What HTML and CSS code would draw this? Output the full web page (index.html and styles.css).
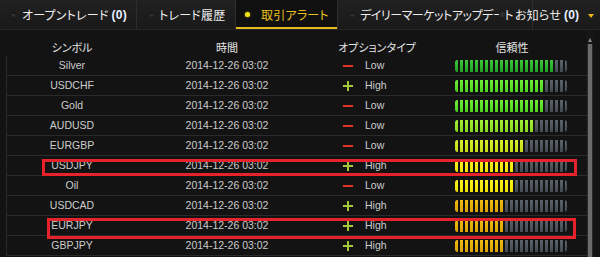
FILE: index.html
```html
<!DOCTYPE html>
<html lang="ja">
<head>
<meta charset="utf-8">
<title>取引アラート</title>
<link rel="stylesheet" href="styles.css">
</head>
<body>
<div class="app">
  <nav class="tabs">
    <div class="tab t1"><span class="dot"></span>オープントレード <b>(0)</b></div>
    <div class="tab t2"><span class="dot"></span>トレード履歴</div>
    <div class="tab t3 active"><span class="dot"></span>取引アラート</div>
    <div class="tab t4"><span class="dot"></span><span class="label">デイリーマーケットアップデート</span></div>
    <div class="tab t5"><span class="dot"></span>お知らせ <b>(0)</b></div>
    <span class="more"></span>
  </nav>
  <div class="main">
    <div class="table">
      <div class="thead">
        <div>シンボル</div><div>時間</div><div>オプションタイプ</div><div>信頼性</div>
      </div>
      <div class="row"><div>Silver</div><div>2014-12-26 03:02</div><div class="opt"><i class="low"></i>Low</div><div class="cell-bar"><div class="bar"><div class="fill c1" style="width:98px"></div></div></div></div>
      <div class="row"><div>USDCHF</div><div>2014-12-26 03:02</div><div class="opt"><i class="high"></i>High</div><div class="cell-bar"><div class="bar"><div class="fill c2" style="width:88px"></div></div></div></div>
      <div class="row"><div>Gold</div><div>2014-12-26 03:02</div><div class="opt"><i class="low"></i>Low</div><div class="cell-bar"><div class="bar"><div class="fill c2" style="width:88px"></div></div></div></div>
      <div class="row"><div>AUDUSD</div><div>2014-12-26 03:02</div><div class="opt"><i class="low"></i>Low</div><div class="cell-bar"><div class="bar"><div class="fill c3" style="width:78px"></div></div></div></div>
      <div class="row"><div>EURGBP</div><div>2014-12-26 03:02</div><div class="opt"><i class="low"></i>Low</div><div class="cell-bar"><div class="bar"><div class="fill c4" style="width:68px"></div></div></div></div>
      <div class="row"><div>USDJPY</div><div>2014-12-26 03:02</div><div class="opt"><i class="high"></i>High</div><div class="cell-bar"><div class="bar"><div class="fill c5" style="width:58px"></div></div></div></div>
      <div class="row"><div>Oil</div><div>2014-12-26 03:02</div><div class="opt"><i class="low"></i>Low</div><div class="cell-bar"><div class="bar"><div class="fill c5" style="width:58px"></div></div></div></div>
      <div class="row"><div>USDCAD</div><div>2014-12-26 03:02</div><div class="opt"><i class="high"></i>High</div><div class="cell-bar"><div class="bar"><div class="fill c6" style="width:48px"></div></div></div></div>
      <div class="row"><div>EURJPY</div><div>2014-12-26 03:02</div><div class="opt"><i class="high"></i>High</div><div class="cell-bar"><div class="bar"><div class="fill c6" style="width:48px"></div></div></div></div>
      <div class="row"><div>GBPJPY</div><div>2014-12-26 03:02</div><div class="opt"><i class="high"></i>High</div><div class="cell-bar"><div class="bar"><div class="fill c6" style="width:48px"></div></div></div></div>
    </div>
    <div class="scroll"><span class="up"></span><span class="track"></span></div>
  </div>
  <div class="mark mark1"></div>
  <div class="mark mark2"></div>
</div>
</body>
</html>
```
FILE: styles.css
```css
html, body {
  margin: 0;
  padding: 0;
  background: #131313;
}
.app {
  position: relative;
  width: 600px;
  height: 257px;
  overflow: hidden;
  background: #131313;
  font-family: "Liberation Sans", "Noto Sans CJK JP", sans-serif;
}

/* tabs */
.tabs {
  display: flex;
  align-items: stretch;
  height: 29px;
  border-bottom: 1px solid #262626;
  background: linear-gradient(#212121, #191919);
  font-family: "Noto Sans CJK JP", sans-serif;
  font-feature-settings: "palt";
  font-size: 12px;
  color: #efefef;
  white-space: nowrap;
}
.tab {
  display: flex;
  align-items: center;
  box-sizing: border-box;
  border-right: 1px solid #2e2e2e;
  letter-spacing: 0.2px;
}
.tab b {
  font-family: "Liberation Sans", sans-serif;
  font-weight: bold;
  font-size: 12px;
  color: #e8f0ff;
  margin-left: 3px;
}
.dot {
  width: 5px;
  height: 5px;
  border-radius: 50%;
  background: #2e2e2e;
  box-shadow: inset 0 1px 1px #0a0a0a;
  flex: none;
}
.t1 { width: 137px; padding-left: 11px; }
.t1 .dot { margin-right: 6px; }
.t2 { width: 99px; padding-left: 12px; }
.t2 .dot { margin-right: 5px; }
.t3 { width: 102px; padding-left: 9px; }
.t3 .dot { margin-right: 11px; }
.t4 { width: 162px; padding-left: 12px; border-right: none; overflow: visible; }
.t4 .dot { margin-right: 5px; }
.t4 .label { letter-spacing: -0.45px; }
.t5 { position: relative; width: 88px; padding-left: 0; border-right: none; }
.t5 .dot { margin-right: 10px; position: relative; z-index: 1; box-shadow: 0 0 0 1px #1c1c1c; }
.t5::after {
  content: "";
  position: absolute;
  left: 32px;
  top: 0;
  bottom: 0;
  width: 1px;
  background: #2e2e2e;
}
.active {
  background: #101010;
  color: #e8c21e;
  box-shadow: inset 0 -2px 0 #e6bc1c;
}
.active .dot {
  background: #f4e21a;
  box-shadow: 0 0 2px #b8a800;
}
.more {
  margin-left: auto;
  margin-right: 6px;
  align-self: center;
  width: 0;
  height: 0;
  border-left: 3px solid transparent;
  border-right: 3px solid transparent;
  border-top: 4px solid #e8b41a;
  margin-top: 2px;
}

/* main area */
.main {
  display: flex;
}
.table {
  flex: 0 0 581px;
  margin-left: 6px;
}
.thead, .row {
  display: grid;
  grid-template-columns: 130px 180px 120px 150px;
  border-left: 1px solid transparent;
}
.thead {
  height: 26px;
  padding-top: 10px;
  box-sizing: border-box;
  line-height: 14px;
  font-family: "Noto Sans CJK JP", sans-serif;
  font-feature-settings: "palt";
  font-size: 11px;
  color: #e6e6e6;
  text-align: center;
}
.row {
  height: 20px;
  box-sizing: border-box;
  border-left-color: #2c2c2c;
  border-bottom: 1px solid #2b2b2b;
  line-height: 19px;
  font-size: 10.5px;
  color: #cdcdcd;
  text-align: center;
}
.opt {
  display: flex;
  align-items: center;
  text-align: left;
  padding-left: 26px;
}
.opt i {
  position: relative;
  display: block;
  width: 10px;
  height: 10px;
  margin-right: 12px;
}
.opt i.low::before {
  content: "";
  position: absolute;
  left: 0;
  top: 4px;
  width: 10px;
  height: 2px;
  background: #e0322a;
}
.opt i.high::before,
.opt i.high::after {
  content: "";
  position: absolute;
  background: #a4c83a;
}
.opt i.high::before { left: 0; top: 4px; width: 10px; height: 2px; }
.opt i.high::after { left: 4px; top: 0; width: 2px; height: 10px; }

.cell-bar {
  display: flex;
  align-items: center;
  padding-left: 18px;
}
.bar {
  display: flex;
  width: 112px;
  height: 12px;
  border-radius: 3px;
  overflow: hidden;
  background:
    repeating-linear-gradient(to right, transparent 0 3px, #121212 3px 5px),
    linear-gradient(#5a626a, #444b52);
}
.fill {
  height: 100%;
  flex: none;
}
.fill.c1 { background: repeating-linear-gradient(to right, transparent 0 3px, #121212 3px 5px), linear-gradient(#3cc83a, #23a024); }
.fill.c2 { background: repeating-linear-gradient(to right, transparent 0 3px, #121212 3px 5px), linear-gradient(#6ef034, #4cd21e); }
.fill.c3 { background: repeating-linear-gradient(to right, transparent 0 3px, #121212 3px 5px), linear-gradient(#a6f034, #84d81e); }
.fill.c4 { background: repeating-linear-gradient(to right, transparent 0 3px, #121212 3px 5px), linear-gradient(#dcee2a, #c2dc16); }
.fill.c5 { background: repeating-linear-gradient(to right, transparent 0 3px, #121212 3px 5px), linear-gradient(#fff420, #eee000); }
.fill.c6 { background: repeating-linear-gradient(to right, transparent 0 3px, #121212 3px 5px), linear-gradient(#f2bc12, #daa000); }

/* scrollbar */
.scroll {
  flex: 0 0 6px;
  display: flex;
  flex-direction: column;
  align-items: center;
  height: 227px;
  background: #161616;
}
.up {
  margin-top: 8px;
  width: 0;
  height: 0;
  border-left: 2px solid transparent;
  border-right: 2px solid transparent;
  border-bottom: 4px solid #8a8a8a;
}
.track {
  margin-top: 2px;
  flex: 1;
  width: 4px;
  background: #6b6b6b;
  border-left: 1px solid #2a2a2a;
  border-right: 1px solid #2a2a2a;
}

/* highlight marks */
.mark {
  position: absolute;
  border: 3px solid #e8222b;
  box-sizing: border-box;
}
.mark1 { left: 42px; top: 159px; width: 535px; height: 17px; }
.mark2 { left: 47px; top: 218px; width: 529px; height: 21px; }
```
